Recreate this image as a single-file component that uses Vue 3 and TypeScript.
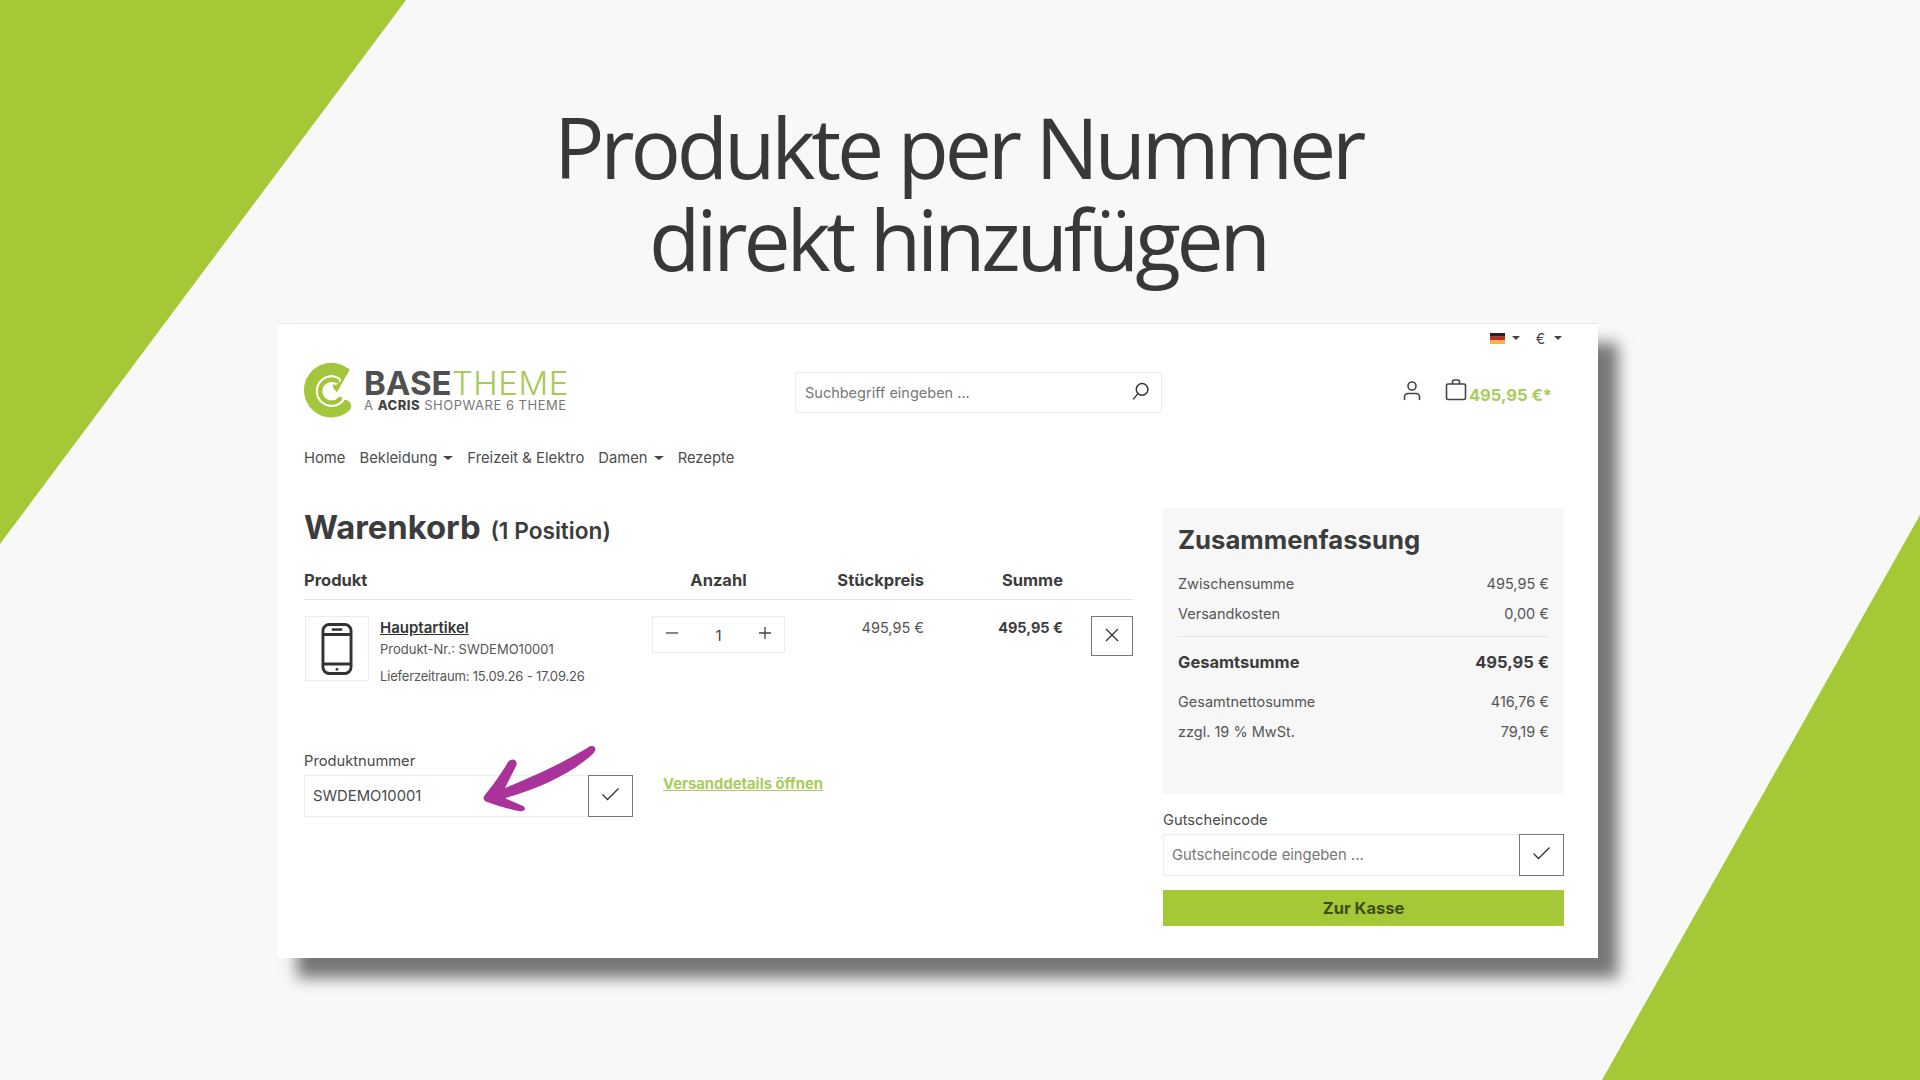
<script setup lang="ts">
const navItems = [
  { label: 'Home', caret: false },
  { label: 'Bekleidung', caret: true },
  { label: 'Freizeit & Elektro', caret: false },
  { label: 'Damen', caret: true },
  { label: 'Rezepte', caret: false },
]
const subRows = [
  { label: 'Zwischensumme', value: '495,95 €' },
  { label: 'Versandkosten', value: '0,00 €' },
]
const taxRows = [
  { label: 'Gesamtnettosumme', value: '416,76 €' },
  { label: 'zzgl. 19 % MwSt.', value: '79,19 €' },
]
</script>

<template>
  <div class="page">
    <div class="tri tri-left"></div>
    <div class="tri tri-right"></div>
    <h1 class="headline">Produkte per Nummer<br />direkt hinzufügen</h1>
    <section class="window">
      <div class="topbar">
        <svg class="flag" width="15" height="11" viewBox="0 0 15 11">
          <rect width="15" height="3.7" fill="#222" />
          <rect y="3.7" width="15" height="3.7" fill="#c8281e" />
          <rect y="7.4" width="15" height="3.6" fill="#f0b93a" />
        </svg>
        <span class="caret"></span>
        <span class="cur">€</span>
        <span class="caret"></span>
      </div>

      <header class="head">
        <div class="logo">
          <svg class="logo-icon" width="52" height="58" viewBox="0 0 52 58">
            <path d="M37.500 10.800 A21 21 0 1 0 41 45" fill="none" stroke="#a3c63c" stroke-width="12.500" stroke-linecap="round" />
            <path d="M31 3 L46 8 L33 31 L29 26 Z" fill="#a3c63c" />
            <path d="M33 20 A11.500 11.500 0 1 0 36 38" fill="none" stroke="#fff" stroke-width="8.500" stroke-linecap="round" />
            <path d="M33 20 A11.500 11.500 0 1 0 36 38" fill="none" stroke="#a3c63c" stroke-width="4.500" stroke-linecap="round" />
            <path d="M41 16 L33 31 L29 27 Z" fill="#a3c63c" />
          </svg>
          <div class="logo-text">
            <div class="logo-main"><b>BASE</b><span>THEME</span></div>
            <div class="logo-sub"><span>A</span> <b>ACRIS</b> <span>SHOPWARE 6 THEME</span></div>
          </div>
        </div>
        <div class="search">
          <span>Suchbegriff eingeben ...</span>
          <svg width="19" height="19" viewBox="0 0 18 18" fill="none" stroke="#333" stroke-width="1.4">
            <circle cx="10.5" cy="7" r="5.5" />
            <path d="M6.5 11 L2.5 16" stroke-linecap="round" />
          </svg>
        </div>
        <div class="account">
          <svg width="18" height="21" viewBox="0 0 18 21" fill="none" stroke="#444" stroke-width="1.6">
            <circle cx="9" cy="6" r="4" />
            <path d="M1.500 19.500 V17 a3.500 3.500 0 0 1 3.500 -3.500 h8 a3.500 3.500 0 0 1 3.500 3.500 v2.500" stroke-linecap="round" />
          </svg>
          <svg class="bag" width="22" height="22" viewBox="0 0 22 22" fill="none" stroke="#444" stroke-width="1.6">
            <path d="M3 5 H19 a1.500 1.500 0 0 1 1.500 1.500 V19 a1.500 1.500 0 0 1 -1.500 1.500 H3 A1.500 1.500 0 0 1 1.500 19 V6.500 A1.500 1.500 0 0 1 3 5 Z" />
            <path d="M7.500 5 V3 a2 2 0 0 1 2 -2 h3 a2 2 0 0 1 2 2 V5" />
          </svg>
          <span class="cart-price">495,95 €*</span>
        </div>
      </header>

      <nav class="nav">
        <span v-for="item in navItems" :key="item.label" class="nav-item">
          {{ item.label }}<i v-if="item.caret" class="caret nav-caret"></i>
        </span>
      </nav>

      <main class="main">
        <div class="cart">
          <h2 class="cart-title">Warenkorb <small>(1 Position)</small></h2>
          <div class="grid grid-head">
            <span>Produkt</span>
            <span class="center">Anzahl</span>
            <span class="right">Stückpreis</span>
            <span class="right">Summe</span>
            <span></span>
          </div>
          <div class="grid grid-row">
            <div class="product">
              <div class="thumb">
                <svg width="32" height="52" viewBox="0 0 30 50" fill="none" stroke="#333" stroke-width="2.8">
                  <rect x="1.500" y="1.500" width="27" height="47" rx="6" />
                  <path d="M1.500 11 H28.500 M1.500 39.500 H28.500" />
                  <path d="M10 6.300 H20" stroke-width="2.400" />
                  <circle cx="15" cy="44.500" r="1.300" fill="#333" stroke="none" />
                </svg>
              </div>
              <div class="info">
                <a class="name">Hauptartikel</a>
                <span class="meta meta-a">Produkt-Nr.: SWDEMO10001</span>
                <span class="meta meta-b">Lieferzeitraum: 15.09.26 - 17.09.26</span>
              </div>
            </div>
            <div class="qty">
              <svg width="14" height="14" viewBox="0 0 14 14" stroke="#444" stroke-width="1.300"><path d="M1 7 H13" /></svg>
              <span>1</span>
              <svg width="14" height="14" viewBox="0 0 14 14" stroke="#444" stroke-width="1.300"><path d="M1 7 H13 M7 1 V13" /></svg>
            </div>
            <span class="right price">495,95 €</span>
            <span class="right price strong">495,95 €</span>
            <div class="remove-cell">
              <button class="icon-btn remove" type="button">
                <svg width="16" height="16" viewBox="0 0 16 16" stroke="#333" stroke-width="1.300"><path d="M2 2 L14 14 M14 2 L2 14" /></svg>
              </button>
            </div>
          </div>

          <div class="add-form">
            <div class="add-field">
              <label class="label">Produktnummer</label>
              <div class="group">
                <div class="input value">SWDEMO10001</div>
                <button class="icon-btn" type="button">
                  <svg class="check" width="19" height="14" viewBox="0 0 18 14" fill="none" stroke="#333" stroke-width="1.300"><path d="M1 7.500 L6 12.500 L17 1.500" /></svg>
                </button>
              </div>
              <svg class="arrow" width="140" height="80" viewBox="0 0 420 240">
                <path fill="#a9329b" d="M360 25 C310 55 240 95 105 150 L140 80 C142 62 122 60 114 72 C92 110 66 145 44 172 C36 184 44 192 58 194 C90 205 125 215 150 220 C168 220 170 208 154 202 C140 196 120 188 105 180 C200 155 310 105 372 44 C382 30 372 20 360 25 Z" />
              </svg>
            </div>
            <a class="ship-link">Versanddetails öffnen</a>
          </div>
        </div>

        <aside class="side">
          <div class="summary">
            <h3 class="sum-title">Zusammenfassung</h3>
            <div v-for="r in subRows" :key="r.label" class="sum-row"><span>{{ r.label }}</span><span>{{ r.value }}</span></div>
            <hr class="sum-line" />
            <div class="sum-row sum-total"><span>Gesamtsumme</span><span>495,95 €</span></div>
            <div class="tax">
              <div v-for="r in taxRows" :key="r.label" class="sum-row"><span>{{ r.label }}</span><span>{{ r.value }}</span></div>
            </div>
          </div>
          <label class="label coupon-label">Gutscheincode</label>
          <div class="group">
            <div class="input placeholder">Gutscheincode eingeben ...</div>
            <button class="icon-btn" type="button">
              <svg class="check" width="19" height="14" viewBox="0 0 18 14" fill="none" stroke="#333" stroke-width="1.300"><path d="M1 7.500 L6 12.500 L17 1.500" /></svg>
            </button>
          </div>
          <button class="checkout" type="button">Zur Kasse</button>
        </aside>
      </main>
    </section>
  </div>
</template>

<style scoped>
.page {
  position: relative;
  width: 1920px;
  height: 1080px;
  overflow: hidden;
  background: #f8f8f8;
  font-family: Inter, "Liberation Sans", sans-serif;
  color: #4a4a4a;
  padding-top: 101px;
  box-sizing: border-box;
}
.tri { position: absolute; background: #a5c936; }
.tri-left { left: 0; top: 0; width: 406px; height: 544px; clip-path: polygon(0 0, 100% 0, 0 100%); }
.tri-right { right: 0; bottom: 0; width: 318px; height: 565px; clip-path: polygon(100% 0, 100% 100%, 0 100%); }
.headline {
  position: relative;
  margin: 0 0 0 -4px;
  text-align: center;
  font-family: "Open Sans", sans-serif;
  font-weight: 400;
  font-size: 84px;
  line-height: 92px;
  letter-spacing: -4.200px;
  color: #383838;
}
.window {
  position: relative;
  margin: 38px 0 0 277px;
  width: 1321px;
  height: 635px;
  box-sizing: border-box;
  padding: 0 34px 0 27px;
  background: #fff;
  border-top: 1px solid #e9e9e9;
  box-shadow: 20px 20px 14px rgba(0, 0, 0, 0.52);
}
.topbar { height: 28px; display: flex; align-items: center; justify-content: flex-end; margin-right: 2px; font-size: 14px; color: #444; }
.flag { margin-right: 7px; }
.cur { margin: 0 9px 0 16px; }
.caret { display: inline-block; width: 0; height: 0; border-left: 4.500px solid transparent; border-right: 4.500px solid transparent; border-top: 4.500px solid #444; }
.head { display: flex; align-items: center; height: 56px; margin-top: 10px; position: relative; }
.logo { display: flex; align-items: center; width: 491px; gap: 8px; }
.logo-icon { flex: none; }
.logo-text { color: #4d4d4d; }
.logo-main { font-size: 33px; line-height: 30px; white-space: nowrap; }
.logo-main b { font-weight: 700; color: #505050; }
.logo-main span { font-weight: 300; color: #a8c95a; letter-spacing: 0.6px; }
.logo-sub { font-size: 13px; line-height: 15px; white-space: nowrap; color: #777; letter-spacing: 0.5px; }
.logo-sub b { font-weight: 800; color: #444; }
.search { width: 367px; height: 41px; box-sizing: border-box; margin-top: 5px; border: 1px solid #ececec; display: flex; align-items: center; justify-content: space-between; padding: 0 11px 3px 9px; font-size: 14.500px; color: #777; }
.search span { padding-top: 3px; }
.account { margin-left: auto; margin-right: 12px; display: flex; align-items: flex-end; }
.bag { margin-left: 24px; margin-right: 2px; }
.cart-price { font-size: 16.500px; font-weight: 700; color: #a9cc5c; line-height: 20px; margin-bottom: -4px; }
.nav { height: 20px; margin-top: 30px; display: flex; gap: 14px; font-size: 14.800px; line-height: 20px; color: #4d4d4d; }
.nav-item { white-space: nowrap; }
.nav-caret { margin-left: 6px; vertical-align: 3px; border-left-width: 5px; border-right-width: 5px; }
.main { display: grid; grid-template-columns: 829px 401px; column-gap: 30px; margin-top: 40px; }
.cart { min-width: 0; }
.cart-title { margin: 0; font-size: 32.800px; line-height: 39px; font-weight: 700; color: #3c3c3c; }
.cart-title small { font-size: 22.700px; font-weight: 600; margin-left: 2px; }
.grid { display: grid; grid-template-columns: 348px 133px 139px 139px 70px; }
.grid-head { margin-top: 20px; line-height: 20px; padding-bottom: 9px; border-bottom: 1px solid #e2e2e2; font-size: 16.500px; font-weight: 700; color: #3c3c3c; }
.center { text-align: center; }
.right { text-align: right; }
.grid-row { margin-top: 16px; height: 65px; }
.product { display: flex; gap: 11px; padding-left: 1px; }
.thumb { width: 64px; height: 65px; box-sizing: border-box; border: 1px solid #ececec; display: flex; align-items: center; justify-content: center; }
.info { display: flex; flex-direction: column; padding-top: 1px; font-size: 13px; color: #555; }
.name { font-size: 15px; font-weight: 600; line-height: 22px; color: #333; text-decoration: underline; }
.meta { line-height: 20px; white-space: nowrap; }
.meta-b { margin-top: 7px; letter-spacing: -0.18px; }
.qty { height: 37px; box-sizing: border-box; border: 1px solid #ececec; display: flex; align-items: center; justify-content: space-between; padding: 0 12px; font-size: 15px; color: #444; }
.qty span { padding-top: 2px; }
.qty svg { margin-bottom: 4px; }
.price { font-size: 14.500px; line-height: 22px; padding-top: 1px; color: #555; }
.strong { font-weight: 700; color: #3c3c3c; }
.remove-cell { display: flex; justify-content: flex-end; }
.icon-btn { flex: none; width: 45px; background: #fff; border: 1px solid #777; padding: 0; display: flex; align-items: center; justify-content: center; }
.check { margin-bottom: 5px; }
.remove { width: 42px; height: 40px; }
.remove svg { margin-bottom: 3px; }
.add-form { margin-top: 70px; display: flex; gap: 29px; }
.add-field { position: relative; width: 329px; }
.label { display: block; font-size: 14.700px; line-height: 20px; color: #4a4a4a; }
.group { display: flex; height: 42px; margin-top: 4px; }
.input { flex: 1; box-sizing: border-box; border: 1px solid #ececec; border-right: 0; display: flex; align-items: center; padding-left: 8px; font-size: 14.800px; }
.value { color: #4a4a4a; }
.placeholder { color: #777; }
.arrow { position: absolute; left: 166px; top: -13px; pointer-events: none; }
.ship-link { margin: 23px 0 0 1px; font-size: 14.800px; line-height: 20px; font-weight: 700; color: #a9cc5c; text-decoration: underline; white-space: nowrap; }
.side { display: flex; flex-direction: column; }
.summary { height: 286px; box-sizing: border-box; background: #f7f7f7; padding: 12px 15px 0 15px; }
.sum-title { margin: 0 0 9px; font-size: 25.700px; line-height: 40px; font-weight: 700; color: #3c3c3c; }
.sum-row { display: flex; justify-content: space-between; font-size: 14.500px; line-height: 30px; color: #555; }
.sum-line { margin: 7px 0 10px; border: 0; border-top: 1px solid #e4e4e4; }
.sum-total { font-size: 16.500px; font-weight: 700; color: #3c3c3c; }
.tax { margin-top: 10px; }
.coupon-label { margin-top: 16px; }
.checkout { margin-top: 14px; height: 36px; border: 0; background: #a5c936; color: #3f4d14; font-family: inherit; font-size: 16.500px; font-weight: 700; }
</style>
